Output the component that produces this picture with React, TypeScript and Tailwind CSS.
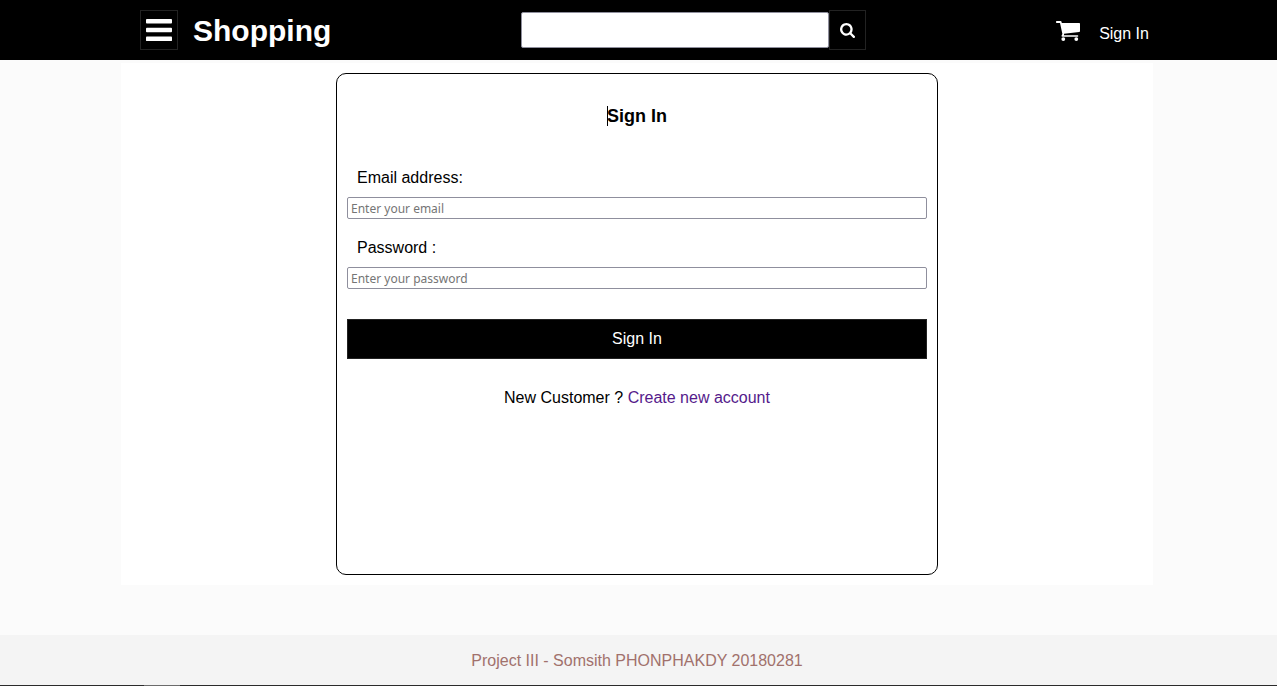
import React from "react";

function BarsIcon() {
  return (
    <svg width="26" height="22" viewBox="0 0 1536 1280" preserveAspectRatio="none" fill="currentColor" aria-hidden="true">
      <rect x="0" y="0" width="1536" height="256" rx="50" />
      <rect x="0" y="512" width="1536" height="256" rx="50" />
      <rect x="0" y="1024" width="1536" height="256" rx="50" />
    </svg>
  );
}

function SearchIcon() {
  return (
    <svg width="15" height="15" viewBox="64 128 1664 1664" fill="currentColor" aria-hidden="true">
      <path d="M1216 832q0-185-131.5-316.5t-316.5-131.5-316.5 131.5-131.5 316.5 131.5 316.5 316.5 131.5 316.5-131.5 131.5-316.5zm512 832q0 52-38 90t-90 38q-54 0-90-38l-343-342q-179 124-399 124-143 0-273.5-55.5t-225-150-150-225-55.5-273.5 55.5-273.5 150-225 225-150 273.5-55.5 273.5 55.5 225 150 150 225 55.5 273.5q0 220-124 399l343 343q37 37 37 90z" />
    </svg>
  );
}

function CartIcon() {
  return (
    <svg width="24" height="20" viewBox="0 0 24 20" fill="currentColor" aria-hidden="true">
      <path d="M.6 0H4.6q.8 0 1 .9L5.8 2H23.3q.7 0 .7.7v7.4q0 .8-.8.9L8 12.8l.1.7-.3.7H21.6q.7 0 .7.8t-.7.8H6.4q-.9 0-.9-.8 0-.4.9-2L4 2H.6Q0 2 0 1t.6-1z" />
      <circle cx="7.3" cy="18.1" r="1.9" />
      <circle cx="20.3" cy="18.1" r="1.9" />
    </svg>
  );
}

type FieldProps = { id: string; label: string; type: string; placeholder: string };

function Field({ id, label, type, placeholder }: FieldProps) {
  return (
    <div className="flex flex-col">
      <label htmlFor={id} className="px-[10px] pb-2 leading-[22px]">
        {label}
      </label>
      <input
        id={id}
        type={type}
        placeholder={placeholder}
        className="h-[22px] w-full rounded-[2px] border border-[#8f8f9d] bg-white px-[3px] font-['Noto_Sans',sans-serif] text-xs placeholder:text-[#757575]"
      />
    </div>
  );
}

export default function App() {
  return (
    <div className="flex min-h-screen flex-col bg-[#fbfbfb] font-['Liberation_Sans',Arial,sans-serif] text-base text-black">
      <header className="bg-black pr-[3px] text-white">
        <div className="mx-auto flex h-[60px] w-[81%] items-center justify-between pr-1 pl-[19px]">
          <div className="flex items-center gap-[15px]">
            <button type="button" aria-label="Open menu" className="flex h-10 w-[38px] items-center justify-center border border-[#222]">
              <BarsIcon />
            </button>
            <a href="#" className="pt-[2px] text-[30px] leading-10 font-bold">
              Shopping
            </a>
          </div>
          <form className="flex items-center" onSubmit={(e) => e.preventDefault()}>
            <input aria-label="Search" type="text" className="h-9 w-[308px] rounded-[2px] border border-[#8f8f9d] bg-white px-2 text-black" />
            <button type="submit" aria-label="Submit search" className="flex h-10 w-[37px] items-center justify-center border border-[#222]">
              <SearchIcon />
            </button>
          </form>
          <nav className="flex items-center gap-[19px] pt-[2px]">
            <a href="#" aria-label="Cart">
              <CartIcon />
            </a>
            <a href="#" className="pt-[6px] leading-6">
              Sign In
            </a>
          </nav>
        </div>
      </header>

      <div className="grow pt-[3px] pr-[3px] pb-[50px]">
        <main className="mx-auto flex w-[81%] justify-center bg-white p-[10px]">
          <form
            className="min-h-[502px] w-full max-w-[602px] rounded-[10px] border border-black px-[10px] pt-8"
            onSubmit={(e) => e.preventDefault()}
          >
            <h1 className="text-center text-lg leading-5 font-bold">
              <span className="relative">
                <span className="absolute top-0 left-0 h-5 w-px bg-black" />
                Sign In
              </span>
            </h1>
            <div className="mt-[41px] flex flex-col gap-[18px]">
              <Field id="email" label="Email address:" type="email" placeholder="Enter your email" />
              <Field id="password" label="Password :" type="password" placeholder="Enter your password" />
            </div>
            <button type="submit" className="mt-[30px] h-10 w-full border border-[#222] bg-black text-white">
              Sign In
            </button>
            <p className="mt-[29px] text-center leading-5">
              New Customer ?{" "}
              <a href="#" className="text-[#551a8b]">
                Create new account
              </a>
            </p>
          </form>
        </main>
      </div>

      <footer className="bg-[#f4f4f4]">
        <p className="pt-4 pr-[3px] pb-[14px] text-center leading-5 text-[#a1716c]">Project III - Somsith PHONPHAKDY 20180281</p>
        <div className="flex h-px bg-[#2b2b2b] pl-36">
          <span className="w-9 bg-[#6b6b6b]" />
        </div>
      </footer>
    </div>
  );
}
